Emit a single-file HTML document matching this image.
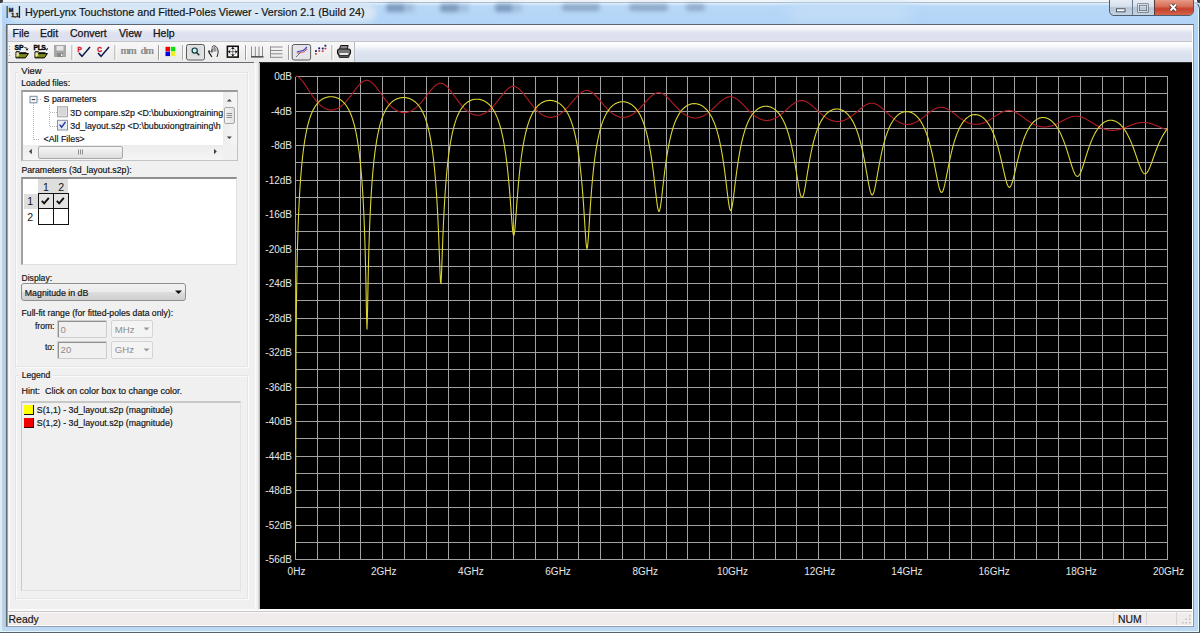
<!DOCTYPE html>
<html><head><meta charset="utf-8">
<style>
*{margin:0;padding:0;box-sizing:border-box}
html,body{width:1200px;height:633px;overflow:hidden;background:#c6dcf0}
body{position:relative;font-family:"Liberation Sans",sans-serif;color:#000}
.a{position:absolute}
.t{position:absolute;white-space:nowrap;line-height:1}
#frame{left:0;top:2px;width:1200px;height:631px;border-radius:0 7px 0 0;
 background:linear-gradient(180deg,#e4f0fa 0px,#b8d8f8 3px,#b2d4f6 20px,#bcd8f2 100%);
 border-top:1px solid #a8bccc;border-right:1px solid #404a50;border-bottom:1px solid #55606a;
 box-shadow:inset -1px -1px 0 #e4f8fc, inset 2px 0 0 #dcecf8}
#title{left:25px;top:6.5px;font-size:10.8px;color:#101820;-webkit-text-stroke:0.2px #101820}
#client{left:6px;top:24px;width:1188px;height:603px;background:#f0f0f0;border-top:1px solid #5a6472;border-left:1px solid #5e6c7a;border-right:1px solid #8a9aa8;border-bottom:1px solid #90a0b0;box-shadow:inset 1px 0 0 #98a4b0, inset 2px 0 0 #fff, inset -1px -1px 0 #fff}
#menubar{left:8px;top:25px;width:1184px;height:16px;background:linear-gradient(#fbfbfd 0%,#f4f5f9 25%,#e2e5f0 45%,#dcdfee 70%,#e0e2f2 100%)}
#menusep{left:8px;top:40.5px;width:1184px;height:1.5px;background:#c2c6c6}
#toolbar{left:8px;top:42px;width:1184px;height:20px;background:linear-gradient(#fdfdfe 0%,#f8f9fc 20%,#e4e9f3 40%,#dbe2ef 65%,#d8e0ee 100%)}
#tbline{left:8px;top:62px;width:1184px;height:1px;background:linear-gradient(90deg,#6a6e74 0,#6a6e74 246px,#e8e8e8 246px,#e8e8e8 251px,#2a2a2a 251px)}
.menu{font-size:10.5px;color:#141420;top:28px;-webkit-text-stroke:0.25px #141420}
#plot{left:260px;top:63px;width:932px;height:546px;background:#000}
#status{left:8px;top:609px;width:1184px;height:16px;background:#f0ecec;border-top:1px solid #fafafa;box-shadow:inset 0 1px 0 #fafafa, inset 0 2px 0 #c8c8c8, inset 0 3px 0 #fafafa}
.lp{font-size:8.8px;color:#111}
.box{position:absolute;background:#fff;border:1px solid #a0a0a0}
</style></head><body>
<div class="a" style="left:0;top:0;width:1200px;height:2px;background:#f2f6fa"></div>
<div class="a" id="frame"></div>
<div class="a" style="left:8px;top:3px;width:368px;height:19px;border-radius:9px;background:#dde9f5;filter:blur(3px);opacity:.9"></div>
<div class="a" style="left:790px;top:4px;width:120px;height:17px;background:#c4def6;filter:blur(8px)"></div>
<div class="a" style="left:386px;top:4px;width:19px;height:8px;background:#6a86a8;filter:blur(2.2px);opacity:.75;border-radius:3px"></div>
<div class="a" style="left:404px;top:4px;width:10px;height:8px;background:#8aa4c0;filter:blur(2.2px);opacity:.5"></div>
<div class="a" style="left:440px;top:4px;width:19px;height:8px;background:#6a86a8;filter:blur(2.2px);opacity:.75;border-radius:3px"></div>
<div class="a" style="left:458px;top:4px;width:11px;height:8px;background:#8aa4c0;filter:blur(2.2px);opacity:.45"></div>
<div class="a" style="left:495px;top:4px;width:18px;height:8px;background:#6a86a8;filter:blur(2.2px);opacity:.75;border-radius:3px"></div>
<div class="a" style="left:512px;top:4px;width:10px;height:8px;background:#8aa4c0;filter:blur(2.2px);opacity:.45"></div>
<div class="a" style="left:562px;top:4px;width:38px;height:7px;background:#7890b0;filter:blur(2.2px);opacity:.65;border-radius:3px"></div>
<div class="a" style="left:629px;top:4px;width:39px;height:7px;background:#7890b0;filter:blur(2.2px);opacity:.65;border-radius:3px"></div>
<div class="a" style="left:686px;top:4px;width:19px;height:7px;background:#7890b0;filter:blur(2.2px);opacity:.6;border-radius:3px"></div>
<div class="t" id="title">HyperLynx Touchstone and Fitted-Poles Viewer - Version 2.1 (Build 24)</div>

<!-- caption buttons -->
<div class="a" style="left:1108.5px;top:-2px;width:85px;height:18px;border:1px solid #4e5e72;border-radius:0 0 5px 5px;overflow:hidden;background:linear-gradient(#e8eef6 0%,#d6e0ec 45%,#b8c6d6 55%,#c4d2e0 100%)">
  <div class="a" style="left:22.5px;top:0;width:1px;height:18px;background:#6a7a8e"></div>
  <div class="a" style="left:44.5px;top:0;width:39px;height:18px;background:linear-gradient(#eaa08c 0%,#d8705a 40%,#c8402a 55%,#d06048 85%,#e08c70 100%);border-left:1px solid #5a3a3a"></div>
</div>
<svg class="a" style="left:1100px;top:0" width="100" height="20" viewBox="1100 0 100 20">
 <rect x="1116.5" y="8.8" width="8.5" height="3" fill="#fff" stroke="#3a4654" stroke-width="0.9"/>
 <rect x="1138.5" y="4.5" width="9" height="7" fill="none" stroke="#3a4654" stroke-width="2"/>
 <rect x="1138.5" y="4.5" width="9" height="7" fill="none" stroke="#fff" stroke-width="0.8"/>
 <path d="M1170.5 4.5l5.5 6M1176 4.5l-5.5 6" stroke="#3a2020" stroke-width="3.4"/>
 <path d="M1170.5 4.5l5.5 6M1176 4.5l-5.5 6" stroke="#fff" stroke-width="2"/>
</svg>
<!-- title icon -->
<svg class="a" style="left:0;top:0" width="24" height="24" viewBox="0 0 24 24">
 <rect x="6.5" y="6" width="1.3" height="12" fill="#3a4a5a"/>
 <rect x="18.8" y="6" width="1.3" height="12" fill="#1a2030"/>
 <text x="8.8" y="11.8" font-family="Liberation Sans" font-weight="bold" font-size="5.5px" fill="#111" stroke="#111" stroke-width="0.3">M</text>
 <text x="11.2" y="17" font-family="Liberation Sans" font-weight="bold" font-size="5.5px" fill="#111" stroke="#111" stroke-width="0.3">1,1</text>
</svg>
<div class="a" style="left:2px;top:26px;width:4px;height:601px;background:linear-gradient(90deg,#c4d6e8,#b4c8dc)"></div>
<div class="a" id="client"></div>
<div class="a" style="left:0;top:0;width:3px;height:3px;background:#3a3e44;border-radius:0 0 2px 0"></div>
<div class="a" style="left:1197px;top:0;width:3px;height:3px;background:#3a3e44;border-radius:0 0 0 2px"></div>
<div class="a" id="menubar"></div>
<div class="a" id="menusep"></div>
<div class="a" id="toolbar"></div>
<div class="a" id="tbline"></div>
<div class="t menu" style="left:12.5px">File</div>
<div class="t menu" style="left:40px">Edit</div>
<div class="t menu" style="left:70px">Convert</div>
<div class="t menu" style="left:119px">View</div>
<div class="t menu" style="left:153px">Help</div>


<div class="a" style="left:8px;top:42px;width:347px;height:20px;background:linear-gradient(#f8f8f8,#efefef 60%,#ebebeb);border-right:1px solid #b8bcc4"></div>
<svg class="a" style="left:0;top:38px" width="400" height="26" viewBox="0 38 400 26">
 <!-- gripper -->
 <g fill="#9aa4b4"><rect x="9" y="46" width="1" height="1"/><rect x="9" y="49" width="1" height="1"/><rect x="9" y="52" width="1" height="1"/><rect x="9" y="55" width="1" height="1"/></g>
 <!-- SP folder -->
 <g font-family="Liberation Sans" font-weight="bold" fill="#000" stroke="#000" stroke-width="0.35">
  <text x="14.6" y="50.4" font-size="6.8px" letter-spacing="-0.2">SP</text>
  <text x="33.6" y="50.4" font-size="6.8px" letter-spacing="-0.5">PLS</text>
 </g>
 <path d="M24.3 47.6q.6-.6 1.2 0t1.2 0" stroke="#000" stroke-width="0.8" fill="none"/>
 <path d="M26 48.3l1 2 1-2M45.6 48.3l1 2 1-2" stroke="#000" stroke-width="0.9" fill="none"/>
 <g stroke="#000" stroke-width="1" stroke-linejoin="round">
  <path d="M16 51.8h3.6l1 1h5.6v1.2" fill="#5a6a08"/>
  <path d="M16 51.8v6.1h9.4l3-4.3H19.2L16 57.9" fill="#7a8a18"/>
  <path d="M35 51.8h3.6l1 1h5.6v1.2" fill="#5a6a08"/>
  <path d="M35 51.8v6.1h9.4l3-4.3H38.2L35 57.9" fill="#7a8a18"/>
 </g>
 <path d="M16.6 52.6l3 2.4-3 2.4z" fill="#f6f288"/>
 <path d="M35.6 52.6l3 2.4-3 2.4z" fill="#f6f288"/>
 <!-- disk -->
 <rect x="54" y="45" width="12" height="12" fill="#a6a6a6"/>
 <rect x="56.5" y="46" width="7" height="4.5" fill="#e6e6e6"/>
 <rect x="57" y="53" width="6" height="4" fill="#8a8a8a"/><rect x="61" y="54" width="1.5" height="2" fill="#e8e8e8"/>
 <!-- separators -->
 <g fill="#9c9c9c"><rect x="71.5" y="45" width="1" height="15"/><rect x="114.5" y="45" width="1" height="15"/><rect x="158" y="45" width="1" height="15"/><rect x="182.2" y="45" width="1" height="15"/><rect x="245" y="45" width="1" height="15"/><rect x="288" y="45" width="1" height="15"/><rect x="331.5" y="45" width="1" height="15"/></g>
 <g fill="#ffffff"><rect x="72.5" y="45" width="1" height="15"/><rect x="115.5" y="45" width="1" height="15"/><rect x="159" y="45" width="1" height="15"/><rect x="183.2" y="45" width="1" height="15"/><rect x="246" y="45" width="1" height="15"/><rect x="289" y="45" width="1" height="15"/><rect x="332.5" y="45" width="1" height="15"/></g>
 <!-- P check -->
 <text x="77.6" y="51.6" font-family="Liberation Sans" font-weight="bold" font-size="6.6px" fill="#e0141e" stroke="#e0141e" stroke-width="0.3">P</text>
 <path d="M79 53l3 3.4 8-9.4" stroke="#101850" stroke-width="1.6" fill="none"/>
 <text x="97.2" y="51.6" font-family="Liberation Sans" font-weight="bold" font-size="6.6px" fill="#d81418" stroke="#d81418" stroke-width="0.3">C</text>
 <path d="M98 53l3 3.4 8-9.4" stroke="#101850" stroke-width="1.6" fill="none"/>
 <!-- mm dm -->
 <text x="120.4" y="54" font-family="Liberation Serif" font-weight="bold" font-size="10.5px" fill="#8a8a8a" letter-spacing="-1.2">mm</text>
 <text x="140.6" y="54" font-family="Liberation Serif" font-weight="bold" font-size="10.5px" fill="#8a8a8a" letter-spacing="-1.1">dm</text>
 <!-- colors -->
 <rect x="165.5" y="46.8" width="4.5" height="4.5" fill="#f00000"/><rect x="170.8" y="46.8" width="4.5" height="4.5" fill="#10e010"/>
 <rect x="165.5" y="51.6" width="4.5" height="4.5" fill="#0000e0"/><rect x="170.8" y="51.6" width="4.5" height="4.5" fill="#f0f020"/>
 <!-- zoom pressed -->
 <rect x="186.5" y="44.5" width="18" height="15.5" rx="2" fill="#e2e2e2" stroke="#5c5c5c" stroke-width="1"/>
 <rect x="190" y="46.5" width="11" height="10" fill="#d8dde0"/>
 <circle cx="194.7" cy="50.6" r="2.6" fill="#c8f0f0" stroke="#103838" stroke-width="1.2"/>
 <path d="M196.5 52.5l2.8 2.8" stroke="#222" stroke-width="1.3"/>
 <!-- hand -->
 <path d="M212 47.5c.6-1.5 1.6-2 2.6-1.6c1 .2 1.6.6 2.2 1.6c.9 1.3 1.4 3 1.3 5c-.1 1.7-.6 3.3-1.2 4.5" stroke="#222" stroke-width="1" fill="none"/>
 <path d="M208.2 51.2c.8-.4 1.6-.2 2.2.4M208.6 51.6l1 1.8 1.3 2 1 1.6" stroke="#151515" stroke-width="1.1" fill="none"/>
 <g stroke="#666" stroke-width="0.8"><path d="M211.6 49.5v3M213 47.2v4.5M214.4 46.8v4.8M215.8 47.5v4.2"/></g>
 <path d="M212 48.5v4" stroke="#222" stroke-width="0.8"/>
 <!-- fit -->
 <rect x="227.4" y="46.3" width="10.8" height="10.8" fill="#fff" stroke="#111" stroke-width="1.6"/>
 <circle cx="232.8" cy="51.7" r="3.4" fill="none" stroke="#aaa" stroke-width="0.8"/>
 <path d="M232.8 47.5v8.5M228.5 51.7h8.5" stroke="#666" stroke-width="0.9"/>
 <path d="M231.3 49h3l-1.5-2.2zM231.3 54.4h3l-1.5 2.2zM230.1 50.2v3l-2.2-1.5zM235.5 50.2v3l2.2-1.5z" fill="#111"/>
 <!-- vertical grid icon -->
 <g fill="#8a8a8a"><rect x="251" y="46.5" width="1" height="10"/><rect x="254.8" y="46.5" width="1" height="10"/><rect x="258.5" y="46.5" width="1" height="10"/><rect x="262" y="46.5" width="1" height="10"/></g>
 <rect x="251" y="56.2" width="12.5" height="1.3" fill="#333"/>
 <!-- horizontal grid icon -->
 <g fill="#8c8c8c"><rect x="270" y="46.5" width="12.5" height="1"/><rect x="270" y="50" width="12.5" height="1"/><rect x="270" y="53.3" width="12.5" height="1"/><rect x="270" y="56.8" width="12.5" height="1"/><rect x="270" y="46.5" width="1" height="11.3"/></g>
 <!-- line chart pressed -->
 <rect x="292.2" y="44.5" width="18.4" height="15.5" rx="2" fill="#e4e4ea" stroke="#5c5c5c" stroke-width="1"/>
 <path d="M296 57l4.5-4.5" stroke="#6a4a6a" stroke-width="0.8"/>
 <path d="M296.8 52.2c1.5-.5 2.5-1 4-1.2s2.5-.3 3.5-1.2l2.6-2.8" stroke="#3a3ac8" stroke-width="1.2" fill="none"/>
 <path d="M297.6 53.5c1.5-.5 2.5-1 4-1.2s2.5-.3 3.5-1.2l2.2-2.2" stroke="#c04040" stroke-width="0.9" fill="none"/>
 <!-- scatter -->
 <g fill="#101080"><rect x="315" y="50.2" width="1.8" height="1.8"/><rect x="318.3" y="47.4" width="1.8" height="1.8"/><rect x="321.8" y="47.6" width="1.8" height="1.8"/><rect x="324.5" y="44.8" width="1.8" height="1.8"/></g>
 <g fill="#c03030"><rect x="315" y="53.2" width="1.8" height="1.5"/><rect x="318.3" y="50.2" width="1.8" height="1.5"/><rect x="321.8" y="50.4" width="1.8" height="1.5"/><rect x="324.5" y="47.8" width="1.8" height="1.5"/></g>
 <!-- printer -->
 <path d="M339.5 49l1.2-3.5h7.5l-1 3.5" fill="#888" stroke="#111" stroke-width="1"/>
 <rect x="337.5" y="49" width="13" height="5.5" rx="2" fill="#777" stroke="#111" stroke-width="1.1"/>
 <rect x="339.5" y="53" width="9" height="2" fill="#e8e8e8"/>
 <path d="M338.5 55.5h11l-1 2h-9z" fill="#555" stroke="#111" stroke-width="0.8"/>
</svg>


<!-- left panel -->
<div class="a" style="left:8px;top:63px;width:251px;height:546px;background:#f0f0f0"></div>
<div class="a" style="left:9px;top:63px;width:1px;height:546px;background:#fbfbfb"></div>
<div class="a" style="left:255px;top:63px;width:1px;height:546px;background:#fbfbfb"></div>
<div class="a" style="left:258px;top:63px;width:2px;height:546px;background:linear-gradient(90deg,#e6e6e6,#b0b0b0)"></div>
<!-- group boxes -->
<div class="a" style="left:15px;top:72px;width:233px;height:295px;border:1px solid #e4e4e4;box-shadow:inset 1px 1px 0 #fafafa, 1px 1px 0 #fafafa"></div>
<div class="a" style="left:15px;top:375px;width:233px;height:224px;border:1px solid #e4e4e4;box-shadow:inset 1px 1px 0 #fafafa, 1px 1px 0 #fafafa"></div>
<div class="a" style="left:19px;top:66px;width:26px;height:10px;background:#f0f0f0"></div>
<div class="a" style="left:19px;top:369px;width:34px;height:10px;background:#f0f0f0"></div>
<!-- tree box -->
<div class="a" style="left:21px;top:90px;width:217px;height:71px;background:#fff;border:1px solid #c4c4c4;border-top:2px solid #9a9a9a;border-left:2px solid #b0b0b0"></div>
<div class="a" style="left:223px;top:92px;width:14px;height:53px;background:linear-gradient(90deg,#ececec,#f6f6f6)"></div>
<div class="a" style="left:223.5px;top:107.2px;width:11.5px;height:16.5px;border:1px solid #a8a8a8;border-radius:2px;background:linear-gradient(90deg,#f4f4f4,#e2e2e2)"></div>
<div class="a" style="left:23px;top:145px;width:200px;height:15px;background:linear-gradient(#ececec,#f6f6f6)"></div>
<div class="a" style="left:38.2px;top:145.5px;width:85px;height:13px;border:1px solid #a8a8a8;border-radius:2px;background:linear-gradient(#f6f6f6,#dedede)"></div>
<div class="a" style="left:223px;top:145px;width:14px;height:15px;background:#f0f0f0"></div>
<div class="a" style="left:21px;top:177px;width:216px;height:88px;background:#fff;border:1px solid #e0e0e0;border-top:2px solid #8e8e8e;border-left:2px solid #a0a0a0"></div>
<!-- param grid -->
<div class="a" style="left:38.4px;top:179px;width:29.6px;height:14.5px;background:#dedede"></div>
<div class="a" style="left:23.5px;top:193.5px;width:15px;height:15px;background:#dedede"></div>
<div class="a" style="left:38.4px;top:193.5px;width:30px;height:15px;background:#e4e4e4"></div>
<div class="a" style="left:38px;top:193px;width:31px;height:31.5px;border:1.5px solid #111"></div>
<div class="a" style="left:52.8px;top:193px;width:1.5px;height:31.5px;background:#111"></div>
<div class="a" style="left:38px;top:207.8px;width:31px;height:1.5px;background:#111"></div>
<!-- display dropdown -->
<div class="a" style="left:21px;top:283px;width:165px;height:17.5px;border:1px solid #8e8f8f;border-radius:3px;background:linear-gradient(#f2f2f2 0%,#ebebeb 50%,#dddddd 51%,#cfcfcf 100%)"></div>
<!-- disabled boxes -->
<div class="a" style="left:57px;top:320.3px;width:50px;height:18px;border:1px solid #cdcdcd;box-shadow:inset 1px 1px 0 #909090;background:#f0f0f0;border-radius:1px"></div>
<div class="a" style="left:57px;top:341.3px;width:50px;height:17.5px;border:1px solid #cdcdcd;box-shadow:inset 1px 1px 0 #909090;background:#f0f0f0;border-radius:1px"></div>
<div class="a" style="left:111px;top:320.3px;width:42px;height:18px;border:1px solid #d4d4d4;background:#f4f4f4;border-radius:2px"></div>
<div class="a" style="left:111px;top:341.3px;width:42px;height:17.5px;border:1px solid #d4d4d4;background:#f4f4f4;border-radius:2px"></div>
<!-- legend list -->
<div class="a" style="left:20.5px;top:401px;width:220px;height:189.5px;border:1px solid #e2e2e2;border-top:2px solid #c8c8c8;border-left:1px solid #c8c8c8;background:#f0f0f0"></div>
<div class="a" style="left:24px;top:404.5px;width:10px;height:10px;background:#ffff00;border-right:1px solid #111;border-bottom:1px solid #111"></div>
<div class="a" style="left:24px;top:418px;width:10px;height:10px;background:#f00000;border-right:1px solid #300;border-bottom:1px solid #300"></div>
<svg class="a" style="left:0;top:0" width="260" height="633" viewBox="0 0 260 633">
 <g font-family="Liberation Sans" font-size="8.6px" fill="#141414" stroke="#141414" stroke-width="0.18">
  <text x="21.3" y="74.2" font-size="9.4px">View</text>
  <text x="21.3" y="86.2">Loaded files:</text>
  <text x="21.4" y="172.6" font-size="8.75px">Parameters (3d_layout.s2p):</text>
  <text x="21.5" y="280.5">Display:</text>
  <text x="24.8" y="295.5" font-size="8.8px">Magnitude in dB</text>
  <text x="21.5" y="315.7" font-size="8.7px">Full-fit range (for fitted-poles data only):</text>
  <text x="54.5" y="328.7" text-anchor="end">from:</text>
  <text x="54.5" y="349.5" text-anchor="end">to:</text>
  <text x="21.7" y="378">Legend</text>
  <text x="21.5" y="394" font-size="9px">Hint:&#160; Click on color box to change color.</text>
  <text x="36.8" y="412.5" font-size="8.8px">S(1,1) - 3d_layout.s2p (magnitude)</text>
  <text x="36.8" y="426" font-size="8.8px">S(1,2) - 3d_layout.s2p (magnitude)</text>
  <text x="46" y="190.5" text-anchor="middle" font-size="10.6px" stroke-width="0">1</text>
  <text x="61.1" y="190.5" text-anchor="middle" font-size="10.6px" stroke-width="0">2</text>
  <text x="30.2" y="205.3" text-anchor="middle" font-size="10.6px" stroke-width="0">1</text>
  <text x="30.2" y="220.8" text-anchor="middle" font-size="10.6px" stroke-width="0">2</text>
 </g>
 <g font-family="Liberation Sans" font-size="9.6px" fill="#8c8c8c">
  <text x="60.6" y="332.6">0</text>
  <text x="60.6" y="353">20</text>
  <text x="114.8" y="332.6">MHz</text>
  <text x="114.8" y="353">GHz</text>
 </g>
 <g fill="#999"><path d="M143.5 327.5h6l-3 3z"/><path d="M143.5 348.5h6l-3 3z"/></g>
 <path d="M175 290.5h7l-3.5 3.5z" fill="#111"/>
 <!-- checks in param grid -->
 <path d="M41.8 200.8l2.4 2.6 4.6-5.6" stroke="#111" stroke-width="1.9" fill="none"/>
 <path d="M56.8 200.8l2.4 2.6 4.6-5.6" stroke="#111" stroke-width="1.9" fill="none"/>
 <!-- tree -->
 <svg x="23" y="92" width="200" height="53" viewBox="23 92 200 53" overflow="hidden">
  <g stroke="#b8b8b8" stroke-width="1" stroke-dasharray="1 1" fill="none">
   <path d="M33.5 103v37M34 139.5h6M49.5 105v22M50 112.5h7M50 126.5h7M38 99.5h4"/>
  </g>
  <rect x="30" y="96.3" width="7" height="6.5" fill="#f4f6fa" stroke="#7a8aa0" stroke-width="1"/>
  <path d="M31.8 99.6h3.4" stroke="#333" stroke-width="1"/>
  <rect x="57.5" y="106.8" width="10" height="10" fill="#e4e4e4" stroke="#a2a2a2" stroke-width="1"/>
  <rect x="59" y="108.3" width="7" height="7" fill="#d6d6d6"/>
  <rect x="57.5" y="120.3" width="10" height="9.7" fill="#e8ecf4" stroke="#8a8f98" stroke-width="1"/>
  <path d="M59.6 124.6l2 2.6 3.9-5.3" stroke="#2a3a9a" stroke-width="1.5" fill="none"/>
  <g font-family="Liberation Sans" font-size="8.8px" fill="#141414" stroke="#141414" stroke-width="0.18">
   <text x="43.6" y="102.2">S parameters</text>
   <text x="70.3" y="115.8">3D compare.s2p &lt;D:\bubuxiongtraining\h</text>
   <text x="70.3" y="129.2">3d_layout.s2p &lt;D:\bubuxiongtraining\h</text>
   <text x="43.6" y="142">&lt;All Files&gt;</text>
  </g>
 </svg>
 <!-- scroll arrows -->
 <g fill="#404040">
  <path d="M226.8 101.5l2.5-2.6 2.5 2.6z"/>
  <path d="M226.8 136.5l2.5 2.6 2.5-2.6z"/>
  <path d="M31.8 154.3l-2.8-2.8 2.8-2.8z"/>
  <path d="M214 148.7l2.8 2.8-2.8 2.8z"/>
 </g>
 <g stroke="#777" stroke-width="0.8"><path d="M226.5 113.5h5.5M226.5 115.5h5.5M226.5 117.5h5.5"/><path d="M78.5 149.5v5M80.5 149.5v5M82.5 149.5v5"/></g>
</svg>

<div class="a" id="plot"></div>
<svg class="a" style="left:0;top:0" width="1200" height="633" viewBox="0 0 1200 633">
 <path d="M295.00 76V559M316.80 76V559M338.60 76V559M360.40 76V559M382.20 76V559M404.00 76V559M425.80 76V559M447.60 76V559M469.40 76V559M491.20 76V559M513.00 76V559M534.80 76V559M556.60 76V559M578.40 76V559M600.20 76V559M622.00 76V559M643.80 76V559M665.60 76V559M687.40 76V559M709.20 76V559M731.00 76V559M752.80 76V559M774.60 76V559M796.40 76V559M818.20 76V559M840.00 76V559M861.80 76V559M883.60 76V559M905.40 76V559M927.20 76V559M949.00 76V559M970.80 76V559M992.60 76V559M1014.40 76V559M1036.20 76V559M1058.00 76V559M1079.80 76V559M1101.60 76V559M1123.40 76V559M1145.20 76V559M1167.00 76V559M295 76.00H1167M295 93.25H1167M295 110.50H1167M295 127.75H1167M295 145.00H1167M295 162.25H1167M295 179.50H1167M295 196.75H1167M295 214.00H1167M295 231.25H1167M295 248.50H1167M295 265.75H1167M295 283.00H1167M295 300.25H1167M295 317.50H1167M295 334.75H1167M295 352.00H1167M295 369.25H1167M295 386.50H1167M295 403.75H1167M295 421.00H1167M295 438.25H1167M295 455.50H1167M295 472.75H1167M295 490.00H1167M295 507.25H1167M295 524.50H1167M295 541.75H1167M295 559.00H1167" stroke="#a2a2a2" stroke-width="1" fill="none" shape-rendering="crispEdges" transform="translate(0.5,0.5)"/>
 <g font-family="Liberation Sans" font-size="10px" fill="#e6e6e6"><text x="292" y="80.0" text-anchor="end">0dB</text><text x="292" y="114.5" text-anchor="end">-4dB</text><text x="292" y="149.0" text-anchor="end">-8dB</text><text x="292" y="183.5" text-anchor="end">-12dB</text><text x="292" y="218.0" text-anchor="end">-16dB</text><text x="292" y="252.5" text-anchor="end">-20dB</text><text x="292" y="287.0" text-anchor="end">-24dB</text><text x="292" y="321.5" text-anchor="end">-28dB</text><text x="292" y="356.0" text-anchor="end">-32dB</text><text x="292" y="390.5" text-anchor="end">-36dB</text><text x="292" y="425.0" text-anchor="end">-40dB</text><text x="292" y="459.5" text-anchor="end">-44dB</text><text x="292" y="494.0" text-anchor="end">-48dB</text><text x="292" y="528.5" text-anchor="end">-52dB</text><text x="292" y="563.0" text-anchor="end">-56dB</text><text x="296.5" y="575" text-anchor="middle">0Hz</text><text x="383.7" y="575" text-anchor="middle">2GHz</text><text x="470.9" y="575" text-anchor="middle">4GHz</text><text x="558.1" y="575" text-anchor="middle">6GHz</text><text x="645.3" y="575" text-anchor="middle">8GHz</text><text x="732.5" y="575" text-anchor="middle">10GHz</text><text x="819.7" y="575" text-anchor="middle">12GHz</text><text x="906.9" y="575" text-anchor="middle">14GHz</text><text x="994.1" y="575" text-anchor="middle">16GHz</text><text x="1081.3" y="575" text-anchor="middle">18GHz</text><text x="1168.5" y="575" text-anchor="middle">20GHz</text></g>
 <polyline points="295.5,76.0 296.0,76.1 296.5,76.2 297.0,76.3 297.5,76.5 298.0,76.8 298.5,77.1 299.0,77.5 299.5,77.9 300.0,78.4 300.5,78.8 301.0,79.4 301.5,79.9 302.0,80.5 302.5,81.2 303.0,81.8 303.5,82.5 304.0,83.2 304.5,83.9 305.0,84.6 305.5,85.4 306.0,86.1 306.5,86.9 307.0,87.7 307.5,88.4 308.0,89.2 308.5,90.0 309.0,90.7 309.5,91.5 310.0,92.3 310.5,93.0 311.0,93.8 311.5,94.5 312.0,95.2 312.5,96.0 313.0,96.7 313.5,97.4 314.0,98.0 314.5,98.7 315.0,99.3 315.5,100.0 316.0,100.6 316.5,101.2 317.0,101.8 317.5,102.3 318.0,102.9 318.5,103.4 319.0,103.9 319.5,104.4 320.0,104.9 320.5,105.3 321.0,105.7 321.5,106.1 322.0,106.5 322.5,106.9 323.0,107.2 323.5,107.6 324.0,107.9 324.5,108.2 325.0,108.4 325.5,108.7 326.0,108.9 326.5,109.1 327.0,109.3 327.5,109.4 328.0,109.6 328.5,109.7 329.0,109.8 329.5,109.9 330.0,109.9 330.5,110.0 331.0,110.0 331.5,110.0 332.0,109.9 332.5,109.9 333.0,109.8 333.5,109.8 334.0,109.7 334.5,109.6 335.0,109.4 335.5,109.3 336.0,109.1 336.5,108.9 337.0,108.7 337.5,108.4 338.0,108.2 338.5,107.9 339.0,107.6 339.5,107.3 340.0,107.0 340.5,106.6 341.0,106.2 341.5,105.8 342.0,105.4 342.5,105.0 343.0,104.6 343.5,104.1 344.0,103.6 344.5,103.1 345.0,102.6 345.5,102.1 346.0,101.5 346.5,101.0 347.0,100.4 347.5,99.8 348.0,99.2 348.5,98.6 349.0,98.0 349.5,97.4 350.0,96.7 350.5,96.1 351.0,95.4 351.5,94.8 352.0,94.1 352.5,93.4 353.0,92.7 353.5,92.1 354.0,91.4 354.5,90.7 355.0,90.0 355.5,89.4 356.0,88.7 356.5,88.1 357.0,87.4 357.5,86.8 358.0,86.2 358.5,85.6 359.0,85.1 359.5,84.5 360.0,84.0 360.5,83.5 361.0,83.0 361.5,82.6 362.0,82.2 362.5,81.8 363.0,81.5 363.5,81.2 364.0,80.9 364.5,80.7 365.0,80.6 365.5,80.4 366.0,80.4 366.5,80.3 367.0,80.3 367.5,80.4 368.0,80.5 368.5,80.6 369.0,80.8 369.5,81.0 370.0,81.3 370.5,81.6 371.0,81.9 371.5,82.3 372.0,82.7 372.5,83.1 373.0,83.6 373.5,84.1 374.0,84.6 374.5,85.2 375.0,85.8 375.5,86.4 376.0,87.0 376.5,87.6 377.0,88.3 377.5,89.0 378.0,89.6 378.5,90.3 379.0,91.0 379.5,91.7 380.0,92.4 380.5,93.1 381.0,93.8 381.5,94.5 382.0,95.2 382.5,95.9 383.0,96.5 383.5,97.2 384.0,97.9 384.5,98.6 385.0,99.2 385.5,99.8 386.0,100.5 386.5,101.1 387.0,101.7 387.5,102.3 388.0,102.9 388.5,103.5 389.0,104.0 389.5,104.5 390.0,105.1 390.5,105.6 391.0,106.1 391.5,106.5 392.0,107.0 392.5,107.4 393.0,107.9 393.5,108.3 394.0,108.7 394.5,109.0 395.0,109.4 395.5,109.7 396.0,110.0 396.5,110.3 397.0,110.6 397.5,110.9 398.0,111.1 398.5,111.4 399.0,111.6 399.5,111.8 400.0,111.9 400.5,112.1 401.0,112.2 401.5,112.3 402.0,112.4 402.5,112.5 403.0,112.6 403.5,112.6 404.0,112.6 404.5,112.6 405.0,112.6 405.5,112.6 406.0,112.5 406.5,112.4 407.0,112.4 407.5,112.2 408.0,112.1 408.5,112.0 409.0,111.8 409.5,111.6 410.0,111.4 410.5,111.2 411.0,110.9 411.5,110.7 412.0,110.4 412.5,110.1 413.0,109.8 413.5,109.5 414.0,109.1 414.5,108.8 415.0,108.4 415.5,108.0 416.0,107.6 416.5,107.1 417.0,106.7 417.5,106.2 418.0,105.7 418.5,105.3 419.0,104.7 419.5,104.2 420.0,103.7 420.5,103.1 421.0,102.6 421.5,102.0 422.0,101.4 422.5,100.8 423.0,100.2 423.5,99.6 424.0,99.0 424.5,98.3 425.0,97.7 425.5,97.1 426.0,96.4 426.5,95.8 427.0,95.1 427.5,94.5 428.0,93.8 428.5,93.2 429.0,92.5 429.5,91.9 430.0,91.3 430.5,90.6 431.0,90.0 431.5,89.4 432.0,88.9 432.5,88.3 433.0,87.8 433.5,87.2 434.0,86.7 434.5,86.3 435.0,85.8 435.5,85.4 436.0,85.0 436.5,84.7 437.0,84.4 437.5,84.1 438.0,83.9 438.5,83.7 439.0,83.5 439.5,83.4 440.0,83.3 440.5,83.3 441.0,83.3 441.5,83.4 442.0,83.5 442.5,83.6 443.0,83.8 443.5,84.0 444.0,84.3 444.5,84.6 445.0,85.0 445.5,85.3 446.0,85.8 446.5,86.2 447.0,86.7 447.5,87.2 448.0,87.7 448.5,88.3 449.0,88.9 449.5,89.5 450.0,90.1 450.5,90.7 451.0,91.4 451.5,92.0 452.0,92.7 452.5,93.4 453.0,94.1 453.5,94.8 454.0,95.5 454.5,96.2 455.0,96.9 455.5,97.5 456.0,98.2 456.5,98.9 457.0,99.6 457.5,100.3 458.0,100.9 458.5,101.6 459.0,102.3 459.5,102.9 460.0,103.5 460.5,104.1 461.0,104.7 461.5,105.3 462.0,105.9 462.5,106.5 463.0,107.0 463.5,107.5 464.0,108.1 464.5,108.6 465.0,109.0 465.5,109.5 466.0,110.0 466.5,110.4 467.0,110.8 467.5,111.2 468.0,111.6 468.5,112.0 469.0,112.3 469.5,112.6 470.0,112.9 470.5,113.2 471.0,113.5 471.5,113.7 472.0,114.0 472.5,114.2 473.0,114.4 473.5,114.6 474.0,114.7 474.5,114.8 475.0,115.0 475.5,115.1 476.0,115.1 476.5,115.2 477.0,115.2 477.5,115.2 478.0,115.2 478.5,115.2 479.0,115.2 479.5,115.1 480.0,115.0 480.5,114.9 481.0,114.8 481.5,114.7 482.0,114.5 482.5,114.3 483.0,114.1 483.5,113.9 484.0,113.7 484.5,113.4 485.0,113.2 485.5,112.9 486.0,112.6 486.5,112.2 487.0,111.9 487.5,111.5 488.0,111.2 488.5,110.8 489.0,110.4 489.5,109.9 490.0,109.5 490.5,109.0 491.0,108.5 491.5,108.0 492.0,107.5 492.5,107.0 493.0,106.5 493.5,105.9 494.0,105.4 494.5,104.8 495.0,104.2 495.5,103.6 496.0,103.0 496.5,102.4 497.0,101.8 497.5,101.1 498.0,100.5 498.5,99.8 499.0,99.2 499.5,98.5 500.0,97.9 500.5,97.3 501.0,96.6 501.5,96.0 502.0,95.3 502.5,94.7 503.0,94.1 503.5,93.5 504.0,92.9 504.5,92.3 505.0,91.7 505.5,91.1 506.0,90.6 506.5,90.1 507.0,89.6 507.5,89.2 508.0,88.7 508.5,88.3 509.0,88.0 509.5,87.6 510.0,87.3 510.5,87.1 511.0,86.8 511.5,86.7 512.0,86.5 512.5,86.4 513.0,86.4 513.5,86.3 514.0,86.4 514.5,86.4 515.0,86.6 515.5,86.7 516.0,86.9 516.5,87.2 517.0,87.4 517.5,87.7 518.0,88.1 518.5,88.5 519.0,88.9 519.5,89.3 520.0,89.8 520.5,90.3 521.0,90.8 521.5,91.4 522.0,92.0 522.5,92.6 523.0,93.2 523.5,93.8 524.0,94.4 524.5,95.0 525.0,95.7 525.5,96.4 526.0,97.0 526.5,97.7 527.0,98.4 527.5,99.0 528.0,99.7 528.5,100.4 529.0,101.0 529.5,101.7 530.0,102.4 530.5,103.0 531.0,103.6 531.5,104.3 532.0,104.9 532.5,105.5 533.0,106.1 533.5,106.7 534.0,107.3 534.5,107.8 535.0,108.4 535.5,108.9 536.0,109.5 536.5,110.0 537.0,110.5 537.5,111.0 538.0,111.4 538.5,111.9 539.0,112.3 539.5,112.7 540.0,113.1 540.5,113.5 541.0,113.9 541.5,114.2 542.0,114.5 542.5,114.8 543.0,115.1 543.5,115.4 544.0,115.7 544.5,115.9 545.0,116.1 545.5,116.3 546.0,116.5 546.5,116.7 547.0,116.8 547.5,117.0 548.0,117.1 548.5,117.2 549.0,117.3 549.5,117.3 550.0,117.4 550.5,117.4 551.0,117.4 551.5,117.4 552.0,117.3 552.5,117.2 553.0,117.2 553.5,117.0 554.0,116.9 554.5,116.8 555.0,116.6 555.5,116.5 556.0,116.3 556.5,116.0 557.0,115.8 557.5,115.6 558.0,115.3 558.5,115.0 559.0,114.7 559.5,114.4 560.0,114.1 560.5,113.7 561.0,113.4 561.5,113.0 562.0,112.6 562.5,112.2 563.0,111.8 563.5,111.3 564.0,110.9 564.5,110.4 565.0,109.9 565.5,109.4 566.0,108.9 566.5,108.4 567.0,107.9 567.5,107.4 568.0,106.8 568.5,106.3 569.0,105.7 569.5,105.1 570.0,104.5 570.5,104.0 571.0,103.4 571.5,102.8 572.0,102.2 572.5,101.6 573.0,101.0 573.5,100.4 574.0,99.8 574.5,99.2 575.0,98.6 575.5,98.1 576.0,97.5 576.5,96.9 577.0,96.4 577.5,95.9 578.0,95.4 578.5,94.9 579.0,94.4 579.5,93.9 580.0,93.5 580.5,93.1 581.0,92.7 581.5,92.3 582.0,92.0 582.5,91.7 583.0,91.4 583.5,91.2 584.0,91.0 584.5,90.8 585.0,90.7 585.5,90.6 586.0,90.5 586.5,90.5 587.0,90.5 587.5,90.5 588.0,90.6 588.5,90.7 589.0,90.8 589.5,91.0 590.0,91.2 590.5,91.5 591.0,91.7 591.5,92.1 592.0,92.4 592.5,92.8 593.0,93.2 593.5,93.6 594.0,94.0 594.5,94.5 595.0,95.0 595.5,95.5 596.0,96.0 596.5,96.5 597.0,97.1 597.5,97.6 598.0,98.2 598.5,98.8 599.0,99.4 599.5,99.9 600.0,100.5 600.5,101.1 601.0,101.7 601.5,102.3 602.0,102.9 602.5,103.5 603.0,104.1 603.5,104.7 604.0,105.3 604.5,105.8 605.0,106.4 605.5,106.9 606.0,107.5 606.5,108.0 607.0,108.5 607.5,109.1 608.0,109.6 608.5,110.0 609.0,110.5 609.5,111.0 610.0,111.4 610.5,111.9 611.0,112.3 611.5,112.7 612.0,113.1 612.5,113.4 613.0,113.8 613.5,114.1 614.0,114.5 614.5,114.8 615.0,115.1 615.5,115.4 616.0,115.6 616.5,115.9 617.0,116.1 617.5,116.3 618.0,116.5 618.5,116.6 619.0,116.8 619.5,116.9 620.0,117.1 620.5,117.2 621.0,117.2 621.5,117.3 622.0,117.4 622.5,117.4 623.0,117.4 623.5,117.4 624.0,117.4 624.5,117.3 625.0,117.3 625.5,117.2 626.0,117.1 626.5,117.0 627.0,116.9 627.5,116.7 628.0,116.6 628.5,116.4 629.0,116.2 629.5,116.0 630.0,115.8 630.5,115.5 631.0,115.3 631.5,115.0 632.0,114.7 632.5,114.4 633.0,114.1 633.5,113.7 634.0,113.4 634.5,113.0 635.0,112.6 635.5,112.2 636.0,111.8 636.5,111.4 637.0,110.9 637.5,110.5 638.0,110.0 638.5,109.5 639.0,109.1 639.5,108.6 640.0,108.1 640.5,107.5 641.0,107.0 641.5,106.5 642.0,106.0 642.5,105.4 643.0,104.9 643.5,104.3 644.0,103.8 644.5,103.2 645.0,102.7 645.5,102.1 646.0,101.5 646.5,101.0 647.0,100.5 647.5,99.9 648.0,99.4 648.5,98.9 649.0,98.4 649.5,97.9 650.0,97.4 650.5,96.9 651.0,96.5 651.5,96.0 652.0,95.6 652.5,95.2 653.0,94.9 653.5,94.5 654.0,94.2 654.5,93.9 655.0,93.7 655.5,93.4 656.0,93.2 656.5,93.1 657.0,92.9 657.5,92.8 658.0,92.8 658.5,92.7 659.0,92.7 659.5,92.7 660.0,92.8 660.5,92.9 661.0,93.1 661.5,93.3 662.0,93.5 662.5,93.7 663.0,94.0 663.5,94.3 664.0,94.6 664.5,94.9 665.0,95.3 665.5,95.7 666.0,96.1 666.5,96.6 667.0,97.0 667.5,97.5 668.0,98.0 668.5,98.5 669.0,99.0 669.5,99.5 670.0,100.1 670.5,100.6 671.0,101.2 671.5,101.7 672.0,102.3 672.5,102.8 673.0,103.4 673.5,103.9 674.0,104.5 674.5,105.0 675.0,105.6 675.5,106.1 676.0,106.7 676.5,107.2 677.0,107.7 677.5,108.3 678.0,108.8 678.5,109.3 679.0,109.8 679.5,110.2 680.0,110.7 680.5,111.2 681.0,111.6 681.5,112.0 682.0,112.5 682.5,112.9 683.0,113.3 683.5,113.6 684.0,114.0 684.5,114.3 685.0,114.7 685.5,115.0 686.0,115.3 686.5,115.6 687.0,115.9 687.5,116.1 688.0,116.4 688.5,116.6 689.0,116.8 689.5,117.0 690.0,117.2 690.5,117.3 691.0,117.5 691.5,117.6 692.0,117.7 692.5,117.8 693.0,117.9 693.5,117.9 694.0,118.0 694.5,118.0 695.0,118.0 695.5,118.0 696.0,118.0 696.5,118.0 697.0,117.9 697.5,117.8 698.0,117.8 698.5,117.7 699.0,117.6 699.5,117.4 700.0,117.3 700.5,117.1 701.0,117.0 701.5,116.8 702.0,116.6 702.5,116.4 703.0,116.1 703.5,115.9 704.0,115.6 704.5,115.3 705.0,115.0 705.5,114.7 706.0,114.4 706.5,114.1 707.0,113.7 707.5,113.4 708.0,113.0 708.5,112.6 709.0,112.2 709.5,111.8 710.0,111.4 710.5,111.0 711.0,110.5 711.5,110.1 712.0,109.6 712.5,109.2 713.0,108.7 713.5,108.2 714.0,107.8 714.5,107.3 715.0,106.8 715.5,106.3 716.0,105.8 716.5,105.3 717.0,104.8 717.5,104.4 718.0,103.9 718.5,103.4 719.0,102.9 719.5,102.5 720.0,102.0 720.5,101.6 721.0,101.2 721.5,100.7 722.0,100.3 722.5,99.9 723.0,99.6 723.5,99.2 724.0,98.9 724.5,98.5 725.0,98.2 725.5,98.0 726.0,97.7 726.5,97.5 727.0,97.3 727.5,97.1 728.0,97.0 728.5,96.9 729.0,96.8 729.5,96.7 730.0,96.7 730.5,96.7 731.0,96.7 731.5,96.8 732.0,96.9 732.5,97.0 733.0,97.1 733.5,97.3 734.0,97.5 734.5,97.7 735.0,98.0 735.5,98.3 736.0,98.6 736.5,98.9 737.0,99.3 737.5,99.6 738.0,100.0 738.5,100.4 739.0,100.9 739.5,101.3 740.0,101.7 740.5,102.2 741.0,102.7 741.5,103.2 742.0,103.7 742.5,104.2 743.0,104.7 743.5,105.2 744.0,105.7 744.5,106.2 745.0,106.7 745.5,107.2 746.0,107.8 746.5,108.3 747.0,108.8 747.5,109.3 748.0,109.8 748.5,110.3 749.0,110.8 749.5,111.3 750.0,111.8 750.5,112.2 751.0,112.7 751.5,113.1 752.0,113.6 752.5,114.0 753.0,114.4 753.5,114.8 754.0,115.2 754.5,115.6 755.0,116.0 755.5,116.3 756.0,116.7 756.5,117.0 757.0,117.3 757.5,117.6 758.0,117.9 758.5,118.2 759.0,118.5 759.5,118.7 760.0,118.9 760.5,119.1 761.0,119.3 761.5,119.5 762.0,119.7 762.5,119.8 763.0,120.0 763.5,120.1 764.0,120.2 764.5,120.3 765.0,120.4 765.5,120.4 766.0,120.5 766.5,120.5 767.0,120.5 767.5,120.5 768.0,120.4 768.5,120.4 769.0,120.3 769.5,120.2 770.0,120.1 770.5,120.0 771.0,119.9 771.5,119.8 772.0,119.6 772.5,119.4 773.0,119.2 773.5,119.0 774.0,118.8 774.5,118.6 775.0,118.3 775.5,118.1 776.0,117.8 776.5,117.5 777.0,117.2 777.5,116.9 778.0,116.6 778.5,116.2 779.0,115.9 779.5,115.5 780.0,115.2 780.5,114.8 781.0,114.4 781.5,114.0 782.0,113.6 782.5,113.2 783.0,112.8 783.5,112.3 784.0,111.9 784.5,111.4 785.0,111.0 785.5,110.6 786.0,110.1 786.5,109.7 787.0,109.2 787.5,108.7 788.0,108.3 788.5,107.8 789.0,107.4 789.5,107.0 790.0,106.5 790.5,106.1 791.0,105.7 791.5,105.2 792.0,104.8 792.5,104.4 793.0,104.1 793.5,103.7 794.0,103.3 794.5,103.0 795.0,102.7 795.5,102.4 796.0,102.1 796.5,101.9 797.0,101.6 797.5,101.4 798.0,101.2 798.5,101.0 799.0,100.9 799.5,100.8 800.0,100.7 800.5,100.6 801.0,100.6 801.5,100.6 802.0,100.6 802.5,100.6 803.0,100.7 803.5,100.8 804.0,100.9 804.5,101.0 805.0,101.2 805.5,101.4 806.0,101.6 806.5,101.8 807.0,102.1 807.5,102.3 808.0,102.6 808.5,102.9 809.0,103.3 809.5,103.6 810.0,104.0 810.5,104.4 811.0,104.8 811.5,105.2 812.0,105.6 812.5,106.0 813.0,106.5 813.5,106.9 814.0,107.4 814.5,107.8 815.0,108.3 815.5,108.7 816.0,109.2 816.5,109.7 817.0,110.1 817.5,110.6 818.0,111.1 818.5,111.5 819.0,112.0 819.5,112.4 820.0,112.9 820.5,113.3 821.0,113.8 821.5,114.2 822.0,114.6 822.5,115.0 823.0,115.4 823.5,115.8 824.0,116.2 824.5,116.6 825.0,116.9 825.5,117.3 826.0,117.6 826.5,117.9 827.0,118.2 827.5,118.5 828.0,118.8 828.5,119.1 829.0,119.4 829.5,119.6 830.0,119.8 830.5,120.1 831.0,120.3 831.5,120.4 832.0,120.6 832.5,120.8 833.0,120.9 833.5,121.1 834.0,121.2 834.5,121.3 835.0,121.3 835.5,121.4 836.0,121.5 836.5,121.5 837.0,121.5 837.5,121.5 838.0,121.5 838.5,121.5 839.0,121.5 839.5,121.4 840.0,121.4 840.5,121.3 841.0,121.2 841.5,121.1 842.0,121.0 842.5,120.9 843.0,120.7 843.5,120.6 844.0,120.4 844.5,120.2 845.0,120.0 845.5,119.8 846.0,119.6 846.5,119.3 847.0,119.1 847.5,118.8 848.0,118.5 848.5,118.2 849.0,117.9 849.5,117.6 850.0,117.3 850.5,116.9 851.0,116.6 851.5,116.2 852.0,115.8 852.5,115.5 853.0,115.1 853.5,114.7 854.0,114.3 854.5,113.9 855.0,113.5 855.5,113.0 856.0,112.6 856.5,112.2 857.0,111.8 857.5,111.3 858.0,110.9 858.5,110.5 859.0,110.0 859.5,109.6 860.0,109.2 860.5,108.8 861.0,108.4 861.5,108.0 862.0,107.6 862.5,107.2 863.0,106.8 863.5,106.5 864.0,106.1 864.5,105.8 865.0,105.5 865.5,105.2 866.0,104.9 866.5,104.6 867.0,104.4 867.5,104.1 868.0,103.9 868.5,103.7 869.0,103.6 869.5,103.5 870.0,103.3 870.5,103.3 871.0,103.2 871.5,103.2 872.0,103.2 872.5,103.2 873.0,103.3 873.5,103.3 874.0,103.4 874.5,103.6 875.0,103.7 875.5,103.9 876.0,104.1 876.5,104.4 877.0,104.6 877.5,104.9 878.0,105.2 878.5,105.5 879.0,105.9 879.5,106.2 880.0,106.6 880.5,107.0 881.0,107.4 881.5,107.8 882.0,108.2 882.5,108.6 883.0,109.1 883.5,109.5 884.0,110.0 884.5,110.4 885.0,110.9 885.5,111.4 886.0,111.8 886.5,112.3 887.0,112.8 887.5,113.3 888.0,113.7 888.5,114.2 889.0,114.7 889.5,115.1 890.0,115.6 890.5,116.0 891.0,116.5 891.5,116.9 892.0,117.3 892.5,117.7 893.0,118.1 893.5,118.5 894.0,118.9 894.5,119.3 895.0,119.7 895.5,120.0 896.0,120.4 896.5,120.7 897.0,121.0 897.5,121.3 898.0,121.6 898.5,121.9 899.0,122.2 899.5,122.4 900.0,122.7 900.5,122.9 901.0,123.1 901.5,123.3 902.0,123.5 902.5,123.7 903.0,123.8 903.5,124.0 904.0,124.1 904.5,124.2 905.0,124.3 905.5,124.4 906.0,124.4 906.5,124.5 907.0,124.5 907.5,124.5 908.0,124.5 908.5,124.5 909.0,124.4 909.5,124.4 910.0,124.3 910.5,124.2 911.0,124.1 911.5,123.9 912.0,123.8 912.5,123.6 913.0,123.5 913.5,123.3 914.0,123.1 914.5,122.9 915.0,122.7 915.5,122.4 916.0,122.2 916.5,121.9 917.0,121.6 917.5,121.3 918.0,121.0 918.5,120.7 919.0,120.4 919.5,120.1 920.0,119.8 920.5,119.4 921.0,119.1 921.5,118.7 922.0,118.3 922.5,117.9 923.0,117.6 923.5,117.2 924.0,116.8 924.5,116.4 925.0,116.0 925.5,115.6 926.0,115.2 926.5,114.8 927.0,114.4 927.5,114.0 928.0,113.6 928.5,113.2 929.0,112.8 929.5,112.4 930.0,112.0 930.5,111.7 931.0,111.3 931.5,111.0 932.0,110.6 932.5,110.3 933.0,110.0 933.5,109.7 934.0,109.4 934.5,109.1 935.0,108.8 935.5,108.6 936.0,108.4 936.5,108.2 937.0,108.0 937.5,107.8 938.0,107.7 938.5,107.6 939.0,107.5 939.5,107.4 940.0,107.3 940.5,107.3 941.0,107.3 941.5,107.3 942.0,107.3 942.5,107.4 943.0,107.5 943.5,107.6 944.0,107.7 944.5,107.8 945.0,108.0 945.5,108.2 946.0,108.4 946.5,108.6 947.0,108.8 947.5,109.1 948.0,109.3 948.5,109.6 949.0,109.9 949.5,110.2 950.0,110.6 950.5,110.9 951.0,111.2 951.5,111.6 952.0,112.0 952.5,112.3 953.0,112.7 953.5,113.1 954.0,113.5 954.5,113.9 955.0,114.3 955.5,114.6 956.0,115.0 956.5,115.4 957.0,115.8 957.5,116.2 958.0,116.6 958.5,117.0 959.0,117.4 959.5,117.7 960.0,118.1 960.5,118.5 961.0,118.8 961.5,119.2 962.0,119.5 962.5,119.8 963.0,120.1 963.5,120.4 964.0,120.7 964.5,121.0 965.0,121.3 965.5,121.6 966.0,121.8 966.5,122.1 967.0,122.3 967.5,122.5 968.0,122.7 968.5,122.9 969.0,123.1 969.5,123.3 970.0,123.5 970.5,123.6 971.0,123.7 971.5,123.9 972.0,124.0 972.5,124.0 973.0,124.1 973.5,124.2 974.0,124.2 974.5,124.3 975.0,124.3 975.5,124.3 976.0,124.3 976.5,124.3 977.0,124.3 977.5,124.2 978.0,124.2 978.5,124.2 979.0,124.1 979.5,124.0 980.0,123.9 980.5,123.8 981.0,123.7 981.5,123.6 982.0,123.4 982.5,123.3 983.0,123.1 983.5,122.9 984.0,122.8 984.5,122.6 985.0,122.3 985.5,122.1 986.0,121.9 986.5,121.6 987.0,121.4 987.5,121.1 988.0,120.9 988.5,120.6 989.0,120.3 989.5,120.0 990.0,119.7 990.5,119.4 991.0,119.1 991.5,118.8 992.0,118.4 992.5,118.1 993.0,117.8 993.5,117.5 994.0,117.1 994.5,116.8 995.0,116.4 995.5,116.1 996.0,115.8 996.5,115.5 997.0,115.1 997.5,114.8 998.0,114.5 998.5,114.2 999.0,113.9 999.5,113.6 1000.0,113.3 1000.5,113.0 1001.0,112.7 1001.5,112.5 1002.0,112.2 1002.5,112.0 1003.0,111.8 1003.5,111.6 1004.0,111.4 1004.5,111.2 1005.0,111.0 1005.5,110.9 1006.0,110.8 1006.5,110.7 1007.0,110.6 1007.5,110.5 1008.0,110.5 1008.5,110.4 1009.0,110.4 1009.5,110.5 1010.0,110.5 1010.5,110.5 1011.0,110.6 1011.5,110.7 1012.0,110.9 1012.5,111.0 1013.0,111.2 1013.5,111.4 1014.0,111.6 1014.5,111.8 1015.0,112.0 1015.5,112.3 1016.0,112.5 1016.5,112.8 1017.0,113.1 1017.5,113.4 1018.0,113.7 1018.5,114.0 1019.0,114.4 1019.5,114.7 1020.0,115.0 1020.5,115.4 1021.0,115.7 1021.5,116.1 1022.0,116.5 1022.5,116.8 1023.0,117.2 1023.5,117.6 1024.0,117.9 1024.5,118.3 1025.0,118.7 1025.5,119.0 1026.0,119.4 1026.5,119.8 1027.0,120.1 1027.5,120.5 1028.0,120.8 1028.5,121.2 1029.0,121.5 1029.5,121.8 1030.0,122.1 1030.5,122.5 1031.0,122.8 1031.5,123.1 1032.0,123.4 1032.5,123.6 1033.0,123.9 1033.5,124.2 1034.0,124.4 1034.5,124.6 1035.0,124.9 1035.5,125.1 1036.0,125.3 1036.5,125.5 1037.0,125.7 1037.5,125.9 1038.0,126.0 1038.5,126.2 1039.0,126.3 1039.5,126.4 1040.0,126.5 1040.5,126.6 1041.0,126.7 1041.5,126.8 1042.0,126.9 1042.5,126.9 1043.0,127.0 1043.5,127.0 1044.0,127.0 1044.5,127.0 1045.0,127.0 1045.5,127.0 1046.0,126.9 1046.5,126.9 1047.0,126.8 1047.5,126.8 1048.0,126.7 1048.5,126.6 1049.0,126.5 1049.5,126.4 1050.0,126.3 1050.5,126.2 1051.0,126.0 1051.5,125.9 1052.0,125.7 1052.5,125.6 1053.0,125.4 1053.5,125.2 1054.0,125.0 1054.5,124.8 1055.0,124.6 1055.5,124.4 1056.0,124.1 1056.5,123.9 1057.0,123.7 1057.5,123.4 1058.0,123.2 1058.5,122.9 1059.0,122.7 1059.5,122.4 1060.0,122.1 1060.5,121.9 1061.0,121.6 1061.5,121.3 1062.0,121.1 1062.5,120.8 1063.0,120.5 1063.5,120.3 1064.0,120.0 1064.5,119.8 1065.0,119.5 1065.5,119.2 1066.0,119.0 1066.5,118.8 1067.0,118.5 1067.5,118.3 1068.0,118.1 1068.5,117.9 1069.0,117.7 1069.5,117.5 1070.0,117.3 1070.5,117.1 1071.0,117.0 1071.5,116.8 1072.0,116.7 1072.5,116.6 1073.0,116.5 1073.5,116.4 1074.0,116.3 1074.5,116.2 1075.0,116.2 1075.5,116.2 1076.0,116.2 1076.5,116.2 1077.0,116.2 1077.5,116.2 1078.0,116.3 1078.5,116.3 1079.0,116.4 1079.5,116.5 1080.0,116.7 1080.5,116.8 1081.0,116.9 1081.5,117.1 1082.0,117.3 1082.5,117.4 1083.0,117.6 1083.5,117.9 1084.0,118.1 1084.5,118.3 1085.0,118.6 1085.5,118.8 1086.0,119.1 1086.5,119.3 1087.0,119.6 1087.5,119.9 1088.0,120.2 1088.5,120.5 1089.0,120.8 1089.5,121.1 1090.0,121.4 1090.5,121.7 1091.0,122.0 1091.5,122.3 1092.0,122.6 1092.5,122.9 1093.0,123.3 1093.5,123.6 1094.0,123.9 1094.5,124.2 1095.0,124.5 1095.5,124.8 1096.0,125.1 1096.5,125.4 1097.0,125.6 1097.5,125.9 1098.0,126.2 1098.5,126.5 1099.0,126.7 1099.5,127.0 1100.0,127.2 1100.5,127.5 1101.0,127.7 1101.5,127.9 1102.0,128.1 1102.5,128.3 1103.0,128.5 1103.5,128.7 1104.0,128.9 1104.5,129.1 1105.0,129.2 1105.5,129.4 1106.0,129.5 1106.5,129.7 1107.0,129.8 1107.5,129.9 1108.0,130.0 1108.5,130.1 1109.0,130.2 1109.5,130.2 1110.0,130.3 1110.5,130.3 1111.0,130.4 1111.5,130.4 1112.0,130.4 1112.5,130.4 1113.0,130.4 1113.5,130.4 1114.0,130.4 1114.5,130.3 1115.0,130.3 1115.5,130.2 1116.0,130.2 1116.5,130.1 1117.0,130.0 1117.5,129.9 1118.0,129.8 1118.5,129.7 1119.0,129.5 1119.5,129.4 1120.0,129.3 1120.5,129.1 1121.0,129.0 1121.5,128.8 1122.0,128.7 1122.5,128.5 1123.0,128.3 1123.5,128.1 1124.0,127.9 1124.5,127.8 1125.0,127.6 1125.5,127.4 1126.0,127.2 1126.5,127.0 1127.0,126.8 1127.5,126.6 1128.0,126.4 1128.5,126.2 1129.0,126.0 1129.5,125.8 1130.0,125.6 1130.5,125.4 1131.0,125.2 1131.5,125.0 1132.0,124.8 1132.5,124.6 1133.0,124.4 1133.5,124.2 1134.0,124.1 1134.5,123.9 1135.0,123.8 1135.5,123.6 1136.0,123.5 1136.5,123.3 1137.0,123.2 1137.5,123.1 1138.0,123.0 1138.5,122.9 1139.0,122.8 1139.5,122.7 1140.0,122.6 1140.5,122.6 1141.0,122.5 1141.5,122.5 1142.0,122.5 1142.5,122.5 1143.0,122.5 1143.5,122.5 1144.0,122.5 1144.5,122.5 1145.0,122.5 1145.5,122.5 1146.0,122.6 1146.5,122.7 1147.0,122.7 1147.5,122.8 1148.0,122.9 1148.5,123.0 1149.0,123.1 1149.5,123.2 1150.0,123.4 1150.5,123.5 1151.0,123.6 1151.5,123.8 1152.0,124.0 1152.5,124.1 1153.0,124.3 1153.5,124.5 1154.0,124.7 1154.5,124.9 1155.0,125.1 1155.5,125.3 1156.0,125.5 1156.5,125.7 1157.0,125.9 1157.5,126.1 1158.0,126.3 1158.5,126.5 1159.0,126.7 1159.5,127.0 1160.0,127.2 1160.5,127.4 1161.0,127.6 1161.5,127.8 1162.0,128.1 1162.5,128.3 1163.0,128.5 1163.5,128.7 1164.0,128.9 1164.5,129.1 1165.0,129.3 1165.5,129.5 1166.0,129.7 1166.5,129.9 1167.0,130.0 1167.5,130.2" stroke="#b41c26" stroke-width="1.1" fill="none"/>
 <polyline points="295.5,553.0 296.0,349.5 296.5,297.7 297.0,267.5 297.5,246.2 298.0,229.7 298.5,216.4 299.0,205.3 299.5,195.7 300.0,187.4 300.5,180.1 301.0,173.6 301.5,167.7 302.0,162.4 302.5,157.6 303.0,153.2 303.5,149.2 304.0,145.5 304.5,142.1 305.0,139.0 305.5,136.1 306.0,133.4 306.5,130.9 307.0,128.6 307.5,126.4 308.0,124.4 308.5,122.5 309.0,120.8 309.5,119.2 310.0,117.6 310.5,116.2 311.0,114.8 311.5,113.6 312.0,112.4 312.5,111.3 313.0,110.3 313.5,109.3 314.0,108.4 314.5,107.5 315.0,106.7 315.5,105.9 316.0,105.2 316.5,104.5 317.0,103.9 317.5,103.3 318.0,102.7 318.5,102.2 319.0,101.7 319.5,101.2 320.0,100.8 320.5,100.4 321.0,100.0 321.5,99.7 322.0,99.3 322.5,99.0 323.0,98.7 323.5,98.5 324.0,98.2 324.5,98.0 325.0,97.8 325.5,97.6 326.0,97.5 326.5,97.3 327.0,97.2 327.5,97.1 328.0,97.0 328.5,96.9 329.0,96.8 329.5,96.7 330.0,96.7 330.5,96.7 331.0,96.7 331.5,96.7 332.0,96.7 332.5,96.8 333.0,96.8 333.5,96.9 334.0,97.0 334.5,97.1 335.0,97.2 335.5,97.3 336.0,97.5 336.5,97.7 337.0,97.9 337.5,98.1 338.0,98.3 338.5,98.5 339.0,98.8 339.5,99.1 340.0,99.4 340.5,99.7 341.0,100.1 341.5,100.5 342.0,100.9 342.5,101.3 343.0,101.8 343.5,102.3 344.0,102.8 344.5,103.3 345.0,103.9 345.5,104.6 346.0,105.2 346.5,106.0 347.0,106.7 347.5,107.5 348.0,108.4 348.5,109.3 349.0,110.2 349.5,111.2 350.0,112.3 350.5,113.5 351.0,114.7 351.5,116.0 352.0,117.4 352.5,118.9 353.0,120.5 353.5,122.2 354.0,124.0 354.5,125.9 355.0,128.0 355.5,130.2 356.0,132.5 356.5,135.1 357.0,137.8 357.5,140.8 358.0,144.0 358.5,147.4 359.0,151.1 359.5,155.2 360.0,159.6 360.5,164.4 361.0,169.7 361.5,175.6 362.0,182.0 362.5,189.3 363.0,197.5 363.5,206.8 364.0,217.5 364.5,230.1 365.0,245.2 365.5,263.7 366.0,286.8 366.5,313.7 367.0,329.6 367.5,313.1 368.0,286.3 368.5,263.4 369.0,245.0 369.5,230.1 370.0,217.6 370.5,206.9 371.0,197.7 371.5,189.6 372.0,182.5 372.5,176.0 373.0,170.3 373.5,165.0 374.0,160.2 374.5,155.9 375.0,151.9 375.5,148.2 376.0,144.8 376.5,141.6 377.0,138.7 377.5,136.0 378.0,133.5 378.5,131.1 379.0,128.9 379.5,126.9 380.0,125.0 380.5,123.2 381.0,121.5 381.5,119.9 382.0,118.5 382.5,117.1 383.0,115.8 383.5,114.6 384.0,113.4 384.5,112.3 385.0,111.3 385.5,110.4 386.0,109.5 386.5,108.6 387.0,107.8 387.5,107.0 388.0,106.3 388.5,105.7 389.0,105.0 389.5,104.4 390.0,103.9 390.5,103.3 391.0,102.8 391.5,102.4 392.0,101.9 392.5,101.5 393.0,101.1 393.5,100.8 394.0,100.4 394.5,100.1 395.0,99.8 395.5,99.6 396.0,99.3 396.5,99.1 397.0,98.8 397.5,98.6 398.0,98.5 398.5,98.3 399.0,98.2 399.5,98.0 400.0,97.9 400.5,97.8 401.0,97.7 401.5,97.7 402.0,97.6 402.5,97.6 403.0,97.5 403.5,97.5 404.0,97.5 404.5,97.6 405.0,97.6 405.5,97.6 406.0,97.7 406.5,97.8 407.0,97.9 407.5,98.0 408.0,98.1 408.5,98.3 409.0,98.4 409.5,98.6 410.0,98.8 410.5,99.0 411.0,99.2 411.5,99.5 412.0,99.7 412.5,100.0 413.0,100.3 413.5,100.7 414.0,101.0 414.5,101.4 415.0,101.8 415.5,102.2 416.0,102.7 416.5,103.1 417.0,103.7 417.5,104.2 418.0,104.8 418.5,105.4 419.0,106.0 419.5,106.7 420.0,107.4 420.5,108.2 421.0,109.0 421.5,109.9 422.0,110.8 422.5,111.7 423.0,112.8 423.5,113.9 424.0,115.0 424.5,116.2 425.0,117.5 425.5,118.9 426.0,120.4 426.5,121.9 427.0,123.6 427.5,125.4 428.0,127.3 428.5,129.3 429.0,131.4 429.5,133.7 430.0,136.2 430.5,138.8 431.0,141.7 431.5,144.7 432.0,148.0 432.5,151.5 433.0,155.3 433.5,159.4 434.0,163.9 434.5,168.8 435.0,174.2 435.5,180.0 436.0,186.5 436.5,193.7 437.0,201.7 437.5,210.6 438.0,220.7 438.5,232.1 439.0,244.9 439.5,258.8 440.0,272.4 440.5,282.1 441.0,282.9 441.5,274.2 442.0,260.9 442.5,246.9 443.0,234.0 443.5,222.4 444.0,212.1 444.5,203.1 445.0,195.0 445.5,187.7 446.0,181.2 446.5,175.2 447.0,169.9 447.5,164.9 448.0,160.4 448.5,156.3 449.0,152.4 449.5,148.9 450.0,145.6 450.5,142.5 451.0,139.7 451.5,137.1 452.0,134.6 452.5,132.3 453.0,130.2 453.5,128.1 454.0,126.3 454.5,124.5 455.0,122.8 455.5,121.3 456.0,119.8 456.5,118.4 457.0,117.1 457.5,115.9 458.0,114.8 458.5,113.7 459.0,112.7 459.5,111.7 460.0,110.8 460.5,110.0 461.0,109.2 461.5,108.4 462.0,107.7 462.5,107.0 463.0,106.4 463.5,105.8 464.0,105.2 464.5,104.7 465.0,104.2 465.5,103.8 466.0,103.3 466.5,102.9 467.0,102.5 467.5,102.2 468.0,101.8 468.5,101.5 469.0,101.2 469.5,101.0 470.0,100.7 470.5,100.5 471.0,100.3 471.5,100.1 472.0,99.9 472.5,99.8 473.0,99.6 473.5,99.5 474.0,99.4 474.5,99.3 475.0,99.3 475.5,99.2 476.0,99.2 476.5,99.2 477.0,99.2 477.5,99.2 478.0,99.2 478.5,99.3 479.0,99.3 479.5,99.4 480.0,99.5 480.5,99.6 481.0,99.7 481.5,99.9 482.0,100.0 482.5,100.2 483.0,100.4 483.5,100.6 484.0,100.9 484.5,101.1 485.0,101.4 485.5,101.7 486.0,102.0 486.5,102.3 487.0,102.7 487.5,103.1 488.0,103.5 488.5,104.0 489.0,104.4 489.5,104.9 490.0,105.5 490.5,106.0 491.0,106.6 491.5,107.2 492.0,107.9 492.5,108.6 493.0,109.4 493.5,110.1 494.0,111.0 494.5,111.9 495.0,112.8 495.5,113.8 496.0,114.8 496.5,115.9 497.0,117.1 497.5,118.4 498.0,119.7 498.5,121.1 499.0,122.6 499.5,124.1 500.0,125.8 500.5,127.6 501.0,129.4 501.5,131.4 502.0,133.6 502.5,135.8 503.0,138.2 503.5,140.8 504.0,143.5 504.5,146.5 505.0,149.6 505.5,152.9 506.0,156.5 506.5,160.4 507.0,164.5 507.5,168.9 508.0,173.6 508.5,178.7 509.0,184.1 509.5,190.0 510.0,196.1 510.5,202.7 511.0,209.4 511.5,216.3 512.0,222.8 512.5,228.7 513.0,233.1 513.5,235.4 514.0,235.1 514.5,232.3 515.0,227.6 515.5,221.6 516.0,214.9 516.5,208.1 517.0,201.4 517.5,194.9 518.0,188.8 518.5,183.1 519.0,177.8 519.5,172.8 520.0,168.1 520.5,163.8 521.0,159.8 521.5,156.0 522.0,152.5 522.5,149.2 523.0,146.2 523.5,143.3 524.0,140.6 524.5,138.1 525.0,135.8 525.5,133.6 526.0,131.5 526.5,129.5 527.0,127.7 527.5,126.0 528.0,124.3 528.5,122.8 529.0,121.4 529.5,120.0 530.0,118.7 530.5,117.5 531.0,116.4 531.5,115.3 532.0,114.3 532.5,113.3 533.0,112.4 533.5,111.6 534.0,110.7 534.5,110.0 535.0,109.3 535.5,108.6 536.0,107.9 536.5,107.3 537.0,106.8 537.5,106.2 538.0,105.7 538.5,105.2 539.0,104.8 539.5,104.4 540.0,104.0 540.5,103.6 541.0,103.3 541.5,102.9 542.0,102.6 542.5,102.4 543.0,102.1 543.5,101.9 544.0,101.6 544.5,101.4 545.0,101.3 545.5,101.1 546.0,101.0 546.5,100.8 547.0,100.7 547.5,100.6 548.0,100.6 548.5,100.5 549.0,100.5 549.5,100.4 550.0,100.4 550.5,100.4 551.0,100.5 551.5,100.5 552.0,100.6 552.5,100.6 553.0,100.7 553.5,100.8 554.0,101.0 554.5,101.1 555.0,101.3 555.5,101.4 556.0,101.6 556.5,101.9 557.0,102.1 557.5,102.3 558.0,102.6 558.5,102.9 559.0,103.2 559.5,103.6 560.0,103.9 560.5,104.3 561.0,104.7 561.5,105.2 562.0,105.6 562.5,106.1 563.0,106.7 563.5,107.2 564.0,107.8 564.5,108.4 565.0,109.1 565.5,109.8 566.0,110.5 566.5,111.3 567.0,112.2 567.5,113.0 568.0,114.0 568.5,115.0 569.0,116.0 569.5,117.1 570.0,118.3 570.5,119.5 571.0,120.8 571.5,122.2 572.0,123.6 572.5,125.2 573.0,126.8 573.5,128.6 574.0,130.4 574.5,132.4 575.0,134.5 575.5,136.7 576.0,139.1 576.5,141.7 577.0,144.4 577.5,147.2 578.0,150.3 578.5,153.6 579.0,157.2 579.5,161.0 580.0,165.1 580.5,169.5 581.0,174.2 581.5,179.3 582.0,184.9 582.5,190.9 583.0,197.3 583.5,204.3 584.0,211.7 584.5,219.5 585.0,227.5 585.5,235.2 586.0,242.0 586.5,246.8 587.0,248.5 587.5,246.8 588.0,242.0 588.5,235.2 589.0,227.4 589.5,219.4 590.0,211.6 590.5,204.1 591.0,197.2 591.5,190.7 592.0,184.7 592.5,179.2 593.0,174.1 593.5,169.3 594.0,164.9 594.5,160.8 595.0,157.0 595.5,153.5 596.0,150.2 596.5,147.1 597.0,144.2 597.5,141.6 598.0,139.0 598.5,136.7 599.0,134.5 599.5,132.4 600.0,130.4 600.5,128.6 601.0,126.9 601.5,125.2 602.0,123.7 602.5,122.2 603.0,120.9 603.5,119.6 604.0,118.4 604.5,117.3 605.0,116.2 605.5,115.2 606.0,114.2 606.5,113.3 607.0,112.4 607.5,111.6 608.0,110.9 608.5,110.1 609.0,109.5 609.5,108.8 610.0,108.2 610.5,107.7 611.0,107.1 611.5,106.6 612.0,106.2 612.5,105.7 613.0,105.3 613.5,104.9 614.0,104.6 614.5,104.2 615.0,103.9 615.5,103.6 616.0,103.4 616.5,103.1 617.0,102.9 617.5,102.7 618.0,102.5 618.5,102.4 619.0,102.2 619.5,102.1 620.0,102.0 620.5,101.9 621.0,101.8 621.5,101.8 622.0,101.7 622.5,101.7 623.0,101.7 623.5,101.8 624.0,101.8 624.5,101.8 625.0,101.9 625.5,102.0 626.0,102.1 626.5,102.2 627.0,102.4 627.5,102.5 628.0,102.7 628.5,102.9 629.0,103.2 629.5,103.4 630.0,103.7 630.5,104.0 631.0,104.3 631.5,104.6 632.0,104.9 632.5,105.3 633.0,105.7 633.5,106.2 634.0,106.6 634.5,107.1 635.0,107.6 635.5,108.2 636.0,108.8 636.5,109.4 637.0,110.1 637.5,110.7 638.0,111.5 638.5,112.3 639.0,113.1 639.5,113.9 640.0,114.8 640.5,115.8 641.0,116.8 641.5,117.9 642.0,119.0 642.5,120.2 643.0,121.5 643.5,122.8 644.0,124.3 644.5,125.8 645.0,127.3 645.5,129.0 646.0,130.8 646.5,132.6 647.0,134.6 647.5,136.7 648.0,138.9 648.5,141.2 649.0,143.7 649.5,146.3 650.0,149.1 650.5,152.0 651.0,155.1 651.5,158.4 652.0,161.8 652.5,165.5 653.0,169.3 653.5,173.3 654.0,177.5 654.5,181.8 655.0,186.2 655.5,190.7 656.0,195.1 656.5,199.3 657.0,203.2 657.5,206.6 658.0,209.2 658.5,210.9 659.0,211.4 659.5,210.8 660.0,209.0 660.5,206.3 661.0,202.9 661.5,199.0 662.0,194.7 662.5,190.3 663.0,185.9 663.5,181.5 664.0,177.2 664.5,173.1 665.0,169.1 665.5,165.3 666.0,161.8 666.5,158.4 667.0,155.1 667.5,152.1 668.0,149.2 668.5,146.5 669.0,143.9 669.5,141.5 670.0,139.2 670.5,137.1 671.0,135.0 671.5,133.1 672.0,131.3 672.5,129.5 673.0,127.9 673.5,126.4 674.0,124.9 674.5,123.5 675.0,122.2 675.5,121.0 676.0,119.8 676.5,118.7 677.0,117.7 677.5,116.7 678.0,115.8 678.5,114.9 679.0,114.1 679.5,113.3 680.0,112.5 680.5,111.8 681.0,111.2 681.5,110.5 682.0,109.9 682.5,109.4 683.0,108.9 683.5,108.4 684.0,107.9 684.5,107.5 685.0,107.1 685.5,106.7 686.0,106.3 686.5,106.0 687.0,105.7 687.5,105.4 688.0,105.1 688.5,104.9 689.0,104.7 689.5,104.5 690.0,104.3 690.5,104.2 691.0,104.0 691.5,103.9 692.0,103.8 692.5,103.7 693.0,103.7 693.5,103.6 694.0,103.6 694.5,103.6 695.0,103.6 695.5,103.7 696.0,103.7 696.5,103.8 697.0,103.9 697.5,104.0 698.0,104.1 698.5,104.2 699.0,104.4 699.5,104.6 700.0,104.8 700.5,105.0 701.0,105.3 701.5,105.5 702.0,105.8 702.5,106.1 703.0,106.5 703.5,106.8 704.0,107.2 704.5,107.6 705.0,108.1 705.5,108.5 706.0,109.0 706.5,109.5 707.0,110.1 707.5,110.7 708.0,111.3 708.5,112.0 709.0,112.7 709.5,113.4 710.0,114.2 710.5,115.0 711.0,115.9 711.5,116.8 712.0,117.8 712.5,118.8 713.0,119.9 713.5,121.0 714.0,122.2 714.5,123.4 715.0,124.8 715.5,126.2 716.0,127.7 716.5,129.2 717.0,130.9 717.5,132.6 718.0,134.4 718.5,136.4 719.0,138.4 719.5,140.6 720.0,142.9 720.5,145.3 721.0,147.8 721.5,150.5 722.0,153.3 722.5,156.3 723.0,159.5 723.5,162.8 724.0,166.2 724.5,169.9 725.0,173.7 725.5,177.6 726.0,181.6 726.5,185.8 727.0,190.0 727.5,194.1 728.0,198.1 728.5,201.8 729.0,205.1 729.5,207.8 730.0,209.6 730.5,210.5 731.0,210.3 731.5,209.2 732.0,207.1 732.5,204.3 733.0,201.0 733.5,197.2 734.0,193.2 734.5,189.0 735.0,184.9 735.5,180.8 736.0,176.9 736.5,173.0 737.0,169.3 737.5,165.8 738.0,162.4 738.5,159.2 739.0,156.1 739.5,153.3 740.0,150.5 740.5,147.9 741.0,145.5 741.5,143.1 742.0,140.9 742.5,138.9 743.0,136.9 743.5,135.0 744.0,133.3 744.5,131.6 745.0,130.0 745.5,128.5 746.0,127.1 746.5,125.7 747.0,124.4 747.5,123.2 748.0,122.1 748.5,121.0 749.0,120.0 749.5,119.0 750.0,118.1 750.5,117.2 751.0,116.4 751.5,115.6 752.0,114.9 752.5,114.2 753.0,113.5 753.5,112.9 754.0,112.3 754.5,111.8 755.0,111.3 755.5,110.8 756.0,110.3 756.5,109.9 757.0,109.5 757.5,109.1 758.0,108.8 758.5,108.4 759.0,108.1 759.5,107.9 760.0,107.6 760.5,107.4 761.0,107.2 761.5,107.0 762.0,106.8 762.5,106.7 763.0,106.6 763.5,106.5 764.0,106.4 764.5,106.3 765.0,106.3 765.5,106.3 766.0,106.3 766.5,106.3 767.0,106.3 767.5,106.4 768.0,106.5 768.5,106.5 769.0,106.7 769.5,106.8 770.0,106.9 770.5,107.1 771.0,107.3 771.5,107.5 772.0,107.8 772.5,108.0 773.0,108.3 773.5,108.6 774.0,108.9 774.5,109.3 775.0,109.7 775.5,110.1 776.0,110.5 776.5,111.0 777.0,111.5 777.5,112.0 778.0,112.5 778.5,113.1 779.0,113.7 779.5,114.4 780.0,115.0 780.5,115.8 781.0,116.5 781.5,117.3 782.0,118.2 782.5,119.1 783.0,120.0 783.5,121.0 784.0,122.0 784.5,123.1 785.0,124.3 785.5,125.5 786.0,126.7 786.5,128.1 787.0,129.5 787.5,130.9 788.0,132.5 788.5,134.1 789.0,135.8 789.5,137.6 790.0,139.5 790.5,141.4 791.0,143.5 791.5,145.6 792.0,147.9 792.5,150.3 793.0,152.7 793.5,155.3 794.0,158.0 794.5,160.8 795.0,163.7 795.5,166.7 796.0,169.7 796.5,172.8 797.0,176.0 797.5,179.1 798.0,182.3 798.5,185.3 799.0,188.2 799.5,190.8 800.0,193.1 800.5,195.0 801.0,196.5 801.5,197.3 802.0,197.6 802.5,197.3 803.0,196.3 803.5,194.8 804.0,192.9 804.5,190.5 805.0,187.9 805.5,185.0 806.0,182.0 806.5,178.9 807.0,175.8 807.5,172.7 808.0,169.6 808.5,166.6 809.0,163.7 809.5,160.9 810.0,158.1 810.5,155.5 811.0,153.0 811.5,150.6 812.0,148.3 812.5,146.1 813.0,144.0 813.5,142.0 814.0,140.1 814.5,138.3 815.0,136.5 815.5,134.9 816.0,133.3 816.5,131.8 817.0,130.4 817.5,129.1 818.0,127.8 818.5,126.6 819.0,125.4 819.5,124.3 820.0,123.2 820.5,122.3 821.0,121.3 821.5,120.4 822.0,119.6 822.5,118.8 823.0,118.0 823.5,117.3 824.0,116.6 824.5,116.0 825.0,115.3 825.5,114.8 826.0,114.2 826.5,113.7 827.0,113.2 827.5,112.8 828.0,112.4 828.5,112.0 829.0,111.6 829.5,111.3 830.0,111.0 830.5,110.7 831.0,110.4 831.5,110.2 832.0,110.0 832.5,109.8 833.0,109.6 833.5,109.4 834.0,109.3 834.5,109.2 835.0,109.1 835.5,109.1 836.0,109.0 836.5,109.0 837.0,109.0 837.5,109.0 838.0,109.0 838.5,109.1 839.0,109.2 839.5,109.3 840.0,109.4 840.5,109.6 841.0,109.7 841.5,109.9 842.0,110.1 842.5,110.4 843.0,110.6 843.5,110.9 844.0,111.2 844.5,111.5 845.0,111.9 845.5,112.3 846.0,112.7 846.5,113.1 847.0,113.6 847.5,114.1 848.0,114.6 848.5,115.2 849.0,115.8 849.5,116.4 850.0,117.0 850.5,117.7 851.0,118.5 851.5,119.3 852.0,120.1 852.5,120.9 853.0,121.8 853.5,122.8 854.0,123.8 854.5,124.9 855.0,126.0 855.5,127.1 856.0,128.4 856.5,129.6 857.0,131.0 857.5,132.4 858.0,133.9 858.5,135.4 859.0,137.1 859.5,138.8 860.0,140.6 860.5,142.5 861.0,144.4 861.5,146.5 862.0,148.6 862.5,150.9 863.0,153.2 863.5,155.6 864.0,158.1 864.5,160.7 865.0,163.4 865.5,166.1 866.0,169.0 866.5,171.8 867.0,174.7 867.5,177.6 868.0,180.4 868.5,183.2 869.0,185.8 869.5,188.2 870.0,190.4 870.5,192.2 871.0,193.6 871.5,194.5 872.0,195.0 872.5,194.9 873.0,194.3 873.5,193.3 874.0,191.8 874.5,189.9 875.0,187.7 875.5,185.2 876.0,182.6 876.5,179.9 877.0,177.1 877.5,174.2 878.0,171.4 878.5,168.6 879.0,165.9 879.5,163.2 880.0,160.6 880.5,158.1 881.0,155.6 881.5,153.3 882.0,151.0 882.5,148.9 883.0,146.8 883.5,144.8 884.0,142.9 884.5,141.1 885.0,139.4 885.5,137.8 886.0,136.2 886.5,134.7 887.0,133.3 887.5,131.9 888.0,130.6 888.5,129.4 889.0,128.2 889.5,127.1 890.0,126.0 890.5,125.0 891.0,124.1 891.5,123.2 892.0,122.3 892.5,121.5 893.0,120.7 893.5,120.0 894.0,119.3 894.5,118.6 895.0,118.0 895.5,117.4 896.0,116.8 896.5,116.3 897.0,115.8 897.5,115.4 898.0,114.9 898.5,114.5 899.0,114.2 899.5,113.8 900.0,113.5 900.5,113.2 901.0,113.0 901.5,112.7 902.0,112.5 902.5,112.3 903.0,112.1 903.5,112.0 904.0,111.9 904.5,111.7 905.0,111.7 905.5,111.6 906.0,111.6 906.5,111.6 907.0,111.6 907.5,111.6 908.0,111.6 908.5,111.7 909.0,111.8 909.5,111.9 910.0,112.1 910.5,112.2 911.0,112.4 911.5,112.6 912.0,112.9 912.5,113.1 913.0,113.4 913.5,113.7 914.0,114.0 914.5,114.4 915.0,114.8 915.5,115.2 916.0,115.6 916.5,116.1 917.0,116.6 917.5,117.1 918.0,117.7 918.5,118.3 919.0,118.9 919.5,119.6 920.0,120.3 920.5,121.0 921.0,121.8 921.5,122.6 922.0,123.5 922.5,124.4 923.0,125.4 923.5,126.4 924.0,127.5 924.5,128.6 925.0,129.7 925.5,131.0 926.0,132.2 926.5,133.6 927.0,135.0 927.5,136.5 928.0,138.0 928.5,139.6 929.0,141.3 929.5,143.0 930.0,144.9 930.5,146.8 931.0,148.8 931.5,150.9 932.0,153.0 932.5,155.2 933.0,157.6 933.5,159.9 934.0,162.4 934.5,164.9 935.0,167.5 935.5,170.1 936.0,172.7 936.5,175.3 937.0,177.9 937.5,180.4 938.0,182.8 938.5,185.0 939.0,187.1 939.5,188.9 940.0,190.3 940.5,191.4 941.0,192.2 941.5,192.4 942.0,192.3 942.5,191.7 943.0,190.7 943.5,189.3 944.0,187.6 944.5,185.7 945.0,183.5 945.5,181.2 946.0,178.7 946.5,176.2 947.0,173.6 947.5,171.1 948.0,168.5 948.5,166.0 949.0,163.5 949.5,161.1 950.0,158.7 950.5,156.5 951.0,154.3 951.5,152.1 952.0,150.1 952.5,148.1 953.0,146.2 953.5,144.4 954.0,142.7 954.5,141.0 955.0,139.5 955.5,138.0 956.0,136.5 956.5,135.1 957.0,133.8 957.5,132.6 958.0,131.4 958.5,130.2 959.0,129.1 959.5,128.1 960.0,127.1 960.5,126.2 961.0,125.3 961.5,124.5 962.0,123.7 962.5,122.9 963.0,122.2 963.5,121.6 964.0,120.9 964.5,120.3 965.0,119.8 965.5,119.2 966.0,118.7 966.5,118.3 967.0,117.8 967.5,117.4 968.0,117.1 968.5,116.7 969.0,116.4 969.5,116.1 970.0,115.8 970.5,115.6 971.0,115.4 971.5,115.2 972.0,115.0 972.5,114.9 973.0,114.8 973.5,114.7 974.0,114.6 974.5,114.6 975.0,114.6 975.5,114.6 976.0,114.6 976.5,114.7 977.0,114.8 977.5,114.9 978.0,115.0 978.5,115.1 979.0,115.3 979.5,115.5 980.0,115.7 980.5,116.0 981.0,116.3 981.5,116.6 982.0,116.9 982.5,117.2 983.0,117.6 983.5,118.0 984.0,118.5 984.5,118.9 985.0,119.5 985.5,120.0 986.0,120.6 986.5,121.2 987.0,121.8 987.5,122.5 988.0,123.2 988.5,123.9 989.0,124.7 989.5,125.5 990.0,126.4 990.5,127.3 991.0,128.3 991.5,129.3 992.0,130.3 992.5,131.4 993.0,132.6 993.5,133.8 994.0,135.0 994.5,136.3 995.0,137.7 995.5,139.1 996.0,140.6 996.5,142.2 997.0,143.8 997.5,145.5 998.0,147.2 998.5,149.0 999.0,150.9 999.5,152.8 1000.0,154.8 1000.5,156.9 1001.0,159.0 1001.5,161.1 1002.0,163.3 1002.5,165.5 1003.0,167.8 1003.5,170.0 1004.0,172.2 1004.5,174.4 1005.0,176.5 1005.5,178.5 1006.0,180.4 1006.5,182.1 1007.0,183.7 1007.5,185.0 1008.0,186.0 1008.5,186.7 1009.0,187.2 1009.5,187.3 1010.0,187.0 1010.5,186.5 1011.0,185.6 1011.5,184.5 1012.0,183.1 1012.5,181.5 1013.0,179.8 1013.5,177.9 1014.0,175.9 1014.5,173.8 1015.0,171.6 1015.5,169.4 1016.0,167.3 1016.5,165.1 1017.0,163.0 1017.5,160.9 1018.0,158.8 1018.5,156.8 1019.0,154.8 1019.5,152.9 1020.0,151.1 1020.5,149.3 1021.0,147.6 1021.5,145.9 1022.0,144.3 1022.5,142.8 1023.0,141.3 1023.5,139.9 1024.0,138.5 1024.5,137.2 1025.0,136.0 1025.5,134.8 1026.0,133.7 1026.5,132.6 1027.0,131.6 1027.5,130.6 1028.0,129.7 1028.5,128.8 1029.0,127.9 1029.5,127.1 1030.0,126.3 1030.5,125.6 1031.0,124.9 1031.5,124.3 1032.0,123.7 1032.5,123.1 1033.0,122.5 1033.5,122.0 1034.0,121.5 1034.5,121.1 1035.0,120.6 1035.5,120.3 1036.0,119.9 1036.5,119.6 1037.0,119.2 1037.5,119.0 1038.0,118.7 1038.5,118.5 1039.0,118.3 1039.5,118.1 1040.0,117.9 1040.5,117.8 1041.0,117.7 1041.5,117.6 1042.0,117.5 1042.5,117.5 1043.0,117.5 1043.5,117.5 1044.0,117.5 1044.5,117.6 1045.0,117.7 1045.5,117.8 1046.0,117.9 1046.5,118.0 1047.0,118.2 1047.5,118.4 1048.0,118.6 1048.5,118.9 1049.0,119.2 1049.5,119.5 1050.0,119.8 1050.5,120.1 1051.0,120.5 1051.5,120.9 1052.0,121.3 1052.5,121.8 1053.0,122.3 1053.5,122.8 1054.0,123.3 1054.5,123.9 1055.0,124.5 1055.5,125.2 1056.0,125.8 1056.5,126.5 1057.0,127.3 1057.5,128.1 1058.0,128.9 1058.5,129.7 1059.0,130.6 1059.5,131.5 1060.0,132.5 1060.5,133.5 1061.0,134.5 1061.5,135.6 1062.0,136.8 1062.5,137.9 1063.0,139.2 1063.5,140.4 1064.0,141.7 1064.5,143.1 1065.0,144.4 1065.5,145.9 1066.0,147.3 1066.5,148.8 1067.0,150.4 1067.5,152.0 1068.0,153.6 1068.5,155.2 1069.0,156.8 1069.5,158.5 1070.0,160.2 1070.5,161.8 1071.0,163.4 1071.5,165.0 1072.0,166.6 1072.5,168.1 1073.0,169.6 1073.5,170.9 1074.0,172.1 1074.5,173.2 1075.0,174.2 1075.5,175.0 1076.0,175.6 1076.5,176.1 1077.0,176.3 1077.5,176.4 1078.0,176.2 1078.5,175.9 1079.0,175.4 1079.5,174.7 1080.0,173.8 1080.5,172.8 1081.0,171.6 1081.5,170.3 1082.0,169.0 1082.5,167.5 1083.0,166.0 1083.5,164.5 1084.0,162.9 1084.5,161.3 1085.0,159.7 1085.5,158.0 1086.0,156.4 1086.5,154.9 1087.0,153.3 1087.5,151.7 1088.0,150.2 1088.5,148.8 1089.0,147.3 1089.5,145.9 1090.0,144.6 1090.5,143.3 1091.0,142.0 1091.5,140.8 1092.0,139.6 1092.5,138.4 1093.0,137.3 1093.5,136.3 1094.0,135.2 1094.5,134.3 1095.0,133.3 1095.5,132.4 1096.0,131.6 1096.5,130.8 1097.0,130.0 1097.5,129.2 1098.0,128.5 1098.5,127.8 1099.0,127.2 1099.5,126.6 1100.0,126.0 1100.5,125.5 1101.0,124.9 1101.5,124.4 1102.0,124.0 1102.5,123.6 1103.0,123.2 1103.5,122.8 1104.0,122.4 1104.5,122.1 1105.0,121.8 1105.5,121.6 1106.0,121.3 1106.5,121.1 1107.0,120.9 1107.5,120.7 1108.0,120.6 1108.5,120.5 1109.0,120.4 1109.5,120.3 1110.0,120.3 1110.5,120.2 1111.0,120.2 1111.5,120.3 1112.0,120.3 1112.5,120.4 1113.0,120.5 1113.5,120.6 1114.0,120.7 1114.5,120.9 1115.0,121.1 1115.5,121.3 1116.0,121.5 1116.5,121.8 1117.0,122.0 1117.5,122.4 1118.0,122.7 1118.5,123.0 1119.0,123.4 1119.5,123.8 1120.0,124.3 1120.5,124.7 1121.0,125.2 1121.5,125.8 1122.0,126.3 1122.5,126.9 1123.0,127.5 1123.5,128.2 1124.0,128.8 1124.5,129.5 1125.0,130.3 1125.5,131.1 1126.0,131.9 1126.5,132.7 1127.0,133.6 1127.5,134.5 1128.0,135.5 1128.5,136.4 1129.0,137.5 1129.5,138.5 1130.0,139.6 1130.5,140.8 1131.0,141.9 1131.5,143.1 1132.0,144.4 1132.5,145.7 1133.0,147.0 1133.5,148.3 1134.0,149.7 1134.5,151.1 1135.0,152.5 1135.5,153.9 1136.0,155.4 1136.5,156.8 1137.0,158.3 1137.5,159.7 1138.0,161.2 1138.5,162.6 1139.0,164.0 1139.5,165.4 1140.0,166.6 1140.5,167.9 1141.0,169.0 1141.5,170.1 1142.0,171.0 1142.5,171.8 1143.0,172.5 1143.5,173.1 1144.0,173.5 1144.5,173.7 1145.0,173.8 1145.5,173.7 1146.0,173.5 1146.5,173.1 1147.0,172.6 1147.5,171.9 1148.0,171.1 1148.5,170.2 1149.0,169.2 1149.5,168.1 1150.0,166.9 1150.5,165.6 1151.0,164.3 1151.5,163.0 1152.0,161.6 1152.5,160.2 1153.0,158.8 1153.5,157.4 1154.0,156.0 1154.5,154.6 1155.0,153.2 1155.5,151.9 1156.0,150.5 1156.5,149.2 1157.0,147.9 1157.5,146.7 1158.0,145.5 1158.5,144.3 1159.0,143.1 1159.5,142.0 1160.0,140.9 1160.5,139.9 1161.0,138.9 1161.5,137.9 1162.0,137.0 1162.5,136.1 1163.0,135.2 1163.5,134.4 1164.0,133.6 1164.5,132.8 1165.0,132.1 1165.5,131.4 1166.0,130.7 1166.5,130.1 1167.0,129.5 1167.5,128.9" stroke="#dcd634" stroke-width="1.1" fill="none"/>
</svg>

<div class="a" id="status"></div>
<div class="a" style="left:1113px;top:611px;width:1px;height:14px;background:#d4d4d4"></div>
<div class="a" style="left:1146px;top:611px;width:1px;height:14px;background:#d4d4d4"></div>
<div class="a" style="left:1176px;top:611px;width:1px;height:14px;background:#d4d4d4"></div>
<svg class="a" style="left:1180px;top:612px" width="12" height="14" viewBox="0 0 12 14"><g fill="#c0c0c0"><rect x="9" y="3" width="1.5" height="1.5"/><rect x="9" y="6.5" width="1.5" height="1.5"/><rect x="9" y="10" width="1.5" height="1.5"/><rect x="5.5" y="6.5" width="1.5" height="1.5"/><rect x="5.5" y="10" width="1.5" height="1.5"/><rect x="2" y="10" width="1.5" height="1.5"/></g></svg>
<div class="t" style="left:8.6px;top:614.5px;font-size:10.4px;color:#1a1a1a;-webkit-text-stroke:0.2px #1a1a1a">Ready</div>
<div class="t" style="left:1118px;top:614.5px;font-size:10.4px;color:#1a1a1a;-webkit-text-stroke:0.2px #1a1a1a">NUM</div>
</body></html>
